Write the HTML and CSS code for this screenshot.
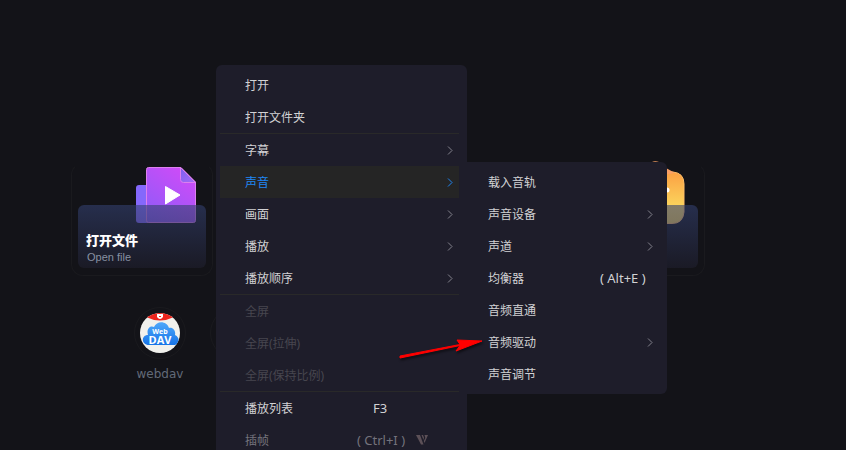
FILE: index.html
```html
<!DOCTYPE html>
<html lang="zh-CN">
<head>
<meta charset="utf-8">
<title>播放器</title>
<link rel="stylesheet" href="styles.css">
</head>
<body>
<svg class="defs" width="0" height="0" aria-hidden="true">
  <defs>
    <linearGradient id="purple" x1="0.1" y1="1" x2="0.75" y2="0"><stop offset="0" stop-color="#8c5cf8"/><stop offset="1" stop-color="#cf4bf8"/></linearGradient>
    <linearGradient id="fold" x1="0" y1="0" x2="1" y2="1"><stop offset="0" stop-color="#7d5ef0"/><stop offset="1" stop-color="#a66cf5"/></linearGradient>
    <linearGradient id="amber" x1="0" y1="0" x2="0" y2="1"><stop offset="0" stop-color="#fba043"/><stop offset="0.700" stop-color="#fbd75e"/></linearGradient>
    <linearGradient id="cloud" x1="0" y1="0" x2="0" y2="1"><stop offset="0" stop-color="#4fa8fa"/><stop offset="1" stop-color="#1674e8"/></linearGradient>
    <clipPath id="disc"><circle cx="20" cy="20" r="20"/></clipPath>
  </defs>
  <symbol id="chevron" viewBox="0 0 6 9"><path d="M1 0.5L5 4.5L1 8.5" fill="none" stroke="currentColor"/></symbol>
</svg>
<main class="app">
  <section class="cards">
    <div class="card-frame">
      <svg class="card-art" width="60" height="56" viewBox="0 0 60 56" aria-hidden="true">
        <rect x="0" y="18" width="30" height="38" rx="3" fill="#8468fb"/>
        <path d="M12.500.5H45L59.500 15V53.500a2 2 0 0 1-2 2H12.500a2 2 0 0 1-2-2V2.500a2 2 0 0 1 2-2z" fill="url(#purple)" stroke="#dc80ee"/>
        <path d="M44.500.5L59.500 15.500H47.500a3 3 0 0 1-3-3z" fill="url(#fold)" stroke="#dc80ee"/>
        <path d="M29.500 19.500L44 28L29.500 37z" fill="#fff" stroke="#fff" stroke-linejoin="round"/>
      </svg>
      <button class="card"><strong>打开文件</strong><span>Open file</span></button>
    </div>
    <div class="card-frame">
      <svg class="card-art card-art-link" width="60" height="64" viewBox="0 0 60 64" aria-hidden="true">
        <path d="M20 11H48Q59 12 59 23V51Q58 62.500 47 62.500H20z" fill="url(#amber)" stroke="#ffbe68"/>
        <path d="M27 1Q30-.5 34 1L41 7L50 12L38 14z" fill="#f9a066"/>
        <circle cx="42" cy="29" r="2.500" fill="#fff"/>
      </svg>
      <button class="card" aria-label="打开链接"></button>
    </div>
  </section>
  <section class="sources">
    <a class="source" href="#">
      <span class="ring">
        <svg width="40" height="40" viewBox="0 0 40 40" aria-hidden="true">
          <g clip-path="url(#disc)">
            <rect width="40" height="40" fill="#f1f1ed"/>
            <path d="M6 0H34V4Q20 11 6 4z" fill="#ed251d"/>
            <path d="M17 1H23V4Q20 8 17 4z" fill="#fff"/>
            <path d="M19 3H21V4H19z" fill="#ed251d"/>
            <path d="M9 32C1 32 1 22 8 22C6 15 11 12 14 14C17 7 27 8 29 15C33 14 36 18 35 22C41 25 39 32 34 32z" fill="url(#cloud)"/>
          </g>
          <text class="logo-text" text-anchor="middle"><tspan class="logo-small" x="20" y="21">Web</tspan><tspan class="logo-large" x="20" y="31">DAV</tspan></text>
        </svg>
      </span>
      <span>webdav</span>
    </a>
    <span class="source"><span class="ring"></span></span>
  </section>

  <ul class="menu main-menu">
    <li><button>打开</button></li>
    <li><button>打开文件夹</button></li>
    <li class="divided"><button>字幕<svg class="chevron"><use href="#chevron"/></svg></button></li>
    <li class="active"><button>声音<svg class="chevron"><use href="#chevron"/></svg></button>
      <ul class="menu submenu">
        <li><button>载入音轨</button></li>
        <li><button>声音设备<svg class="chevron"><use href="#chevron"/></svg></button></li>
        <li><button>声道<svg class="chevron"><use href="#chevron"/></svg></button></li>
        <li><button>均衡器<kbd>( Alt+E )</kbd></button></li>
        <li><button>音频直通</button></li>
        <li><button>音频驱动<svg class="chevron"><use href="#chevron"/></svg></button></li>
        <li><button>声音调节</button></li>
      </ul>
    </li>
    <li><button>画面<svg class="chevron"><use href="#chevron"/></svg></button></li>
    <li><button>播放<svg class="chevron"><use href="#chevron"/></svg></button></li>
    <li><button>播放顺序<svg class="chevron"><use href="#chevron"/></svg></button></li>
    <li class="divided"><button disabled>全屏</button></li>
    <li><button disabled>全屏(拉伸)</button></li>
    <li><button disabled>全屏(保持比例)</button></li>
    <li class="divided"><button>播放列表<kbd>F3</kbd></button></li>
    <li class="premium"><button>插帧<kbd>( Ctrl+I )</kbd><svg class="badge" width="12" height="10" viewBox="0 0 12 10" aria-hidden="true"><path d="M0 0H4L7.500 9.500H5z" fill="#5c5057"/><path d="M5.500 0L7.500 5L8 2.500L7 0zM8.500 0H12L8.500 8L7.800 6L9.300 3z" fill="#5c5057"/></svg></button></li>
  </ul>

  <svg class="pointer" width="90" height="24" viewBox="0 0 90 24" aria-hidden="true">
    <path d="M4 19L64 7.500L61 3L86 4L60 14L64 8.500L4 21z" fill="#f00" stroke="#f00" stroke-width="1" stroke-linejoin="round"/>
  </svg>
</main>
</body>
</html>
```
FILE: styles.css
```css
* { box-sizing: border-box; }
body { margin: 0; background: #fff; font-family: "Noto Sans", "Noto Sans CJK SC", sans-serif; }
button { border: 0; font: inherit; color: inherit; text-align: left; }
.defs { position: absolute; }

.app {
  position: relative;
  height: 100vh;
  padding: 163px 0 0 71px;
  overflow: hidden;
  background: #131318;
  border: solid #fff;
  border-width: 0 1px 1px 0;
}

.cards { display: flex; gap: 350px; }
.card-frame {
  position: relative;
  width: 142px;
  padding: 41px 6px 7px;
  border: 1px solid #1a1a1e;
  border-top-color: transparent;
  border-radius: 12px;
}
.card-art { position: absolute; top: 3px; right: 16px; }
.card-art-link { top: -3px; right: 19px; }
.card {
  position: relative;
  display: flex;
  flex-direction: column;
  justify-content: flex-end;
  gap: 2px;
  width: 100%;
  height: 63px;
  padding: 0 8px 4px;
  border-radius: 6px;
  background: linear-gradient(rgba(51, 64, 112, .6), rgba(31, 31, 46, .6));
  font-size: 13px;
  line-height: 16px;
}
.card strong { color: #fff; font-family: "Noto Sans CJK SC", sans-serif; font-weight: 900; }
.card span { padding-left: 1px; color: #8790a2; font: 11px/14px "Liberation Sans", sans-serif; }

.sources { display: flex; gap: 24px; padding: 31px 0 0 63px; }
.source {
  display: flex;
  flex-direction: column;
  align-items: center;
  gap: 7px;
  width: 52px;
  color: #626a78;
  font: 12px/16px "DejaVu Sans", sans-serif;
  text-decoration: none;
}
.ring {
  display: grid;
  place-items: center;
  width: 52px;
  height: 52px;
  border: 1px solid #1a1a1e;
  border-radius: 50%;
}
.logo-text { fill: #fff; font-family: "Open Sans", sans-serif; font-weight: 700; }
.logo-small { font-size: 7px; }
.logo-large { font-size: 11px; }

.menu {
  position: absolute;
  margin: 0;
  padding: 4px 8px 4px 4px;
  border-radius: 6px;
  background: #1e1d2a;
  color: #d2d2d4;
  font-size: 12px;
  list-style: none;
}
.main-menu { top: 65px; left: 216px; width: 251px; }
.menu.submenu { top: -4px; left: 247px; width: 200px; padding: 4px; border-radius: 0 6px 6px 0; }
.menu li { position: relative; }
.menu button {
  position: relative;
  display: flex;
  align-items: center;
  width: 100%;
  height: 32px;
  padding: 0 6px 0 25px;
  background: none;
}
.menu .submenu button { padding: 0 10px 0 17px; }
.divided { border-top: 1px solid #292929; }
.chevron { width: 6px; height: 9px; margin-left: auto; color: #83838c; }
.menu .active > button { background: #252525; color: #2087f5; }
.active > button .chevron { color: #2087f5; }
.menu button:disabled { color: #47464f; }
.menu kbd { position: absolute; left: 153px; font: inherit; font-size: 13px; }
.premium kbd { left: 137px; }
.submenu kbd { left: 129px; }
.premium { color: #74737c; }
.badge { position: absolute; left: 196px; }

.pointer { position: absolute; top: 337px; left: 396px; filter: drop-shadow(1px 2px 1px #0008); pointer-events: none; }
```
